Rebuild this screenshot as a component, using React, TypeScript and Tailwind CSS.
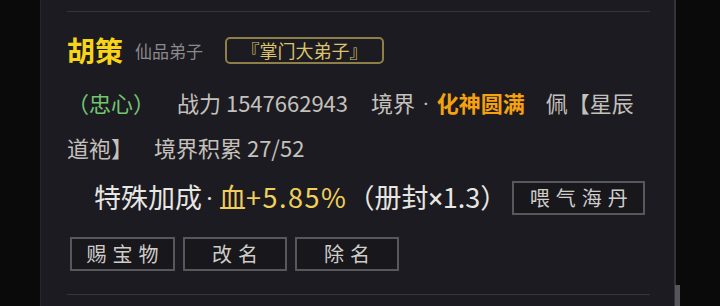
import React from 'react'

const FONT = '"Noto Sans CJK SC", "Noto Sans", sans-serif'
const LATIN = { fontFamily: 'Roboto, "Liberation Sans", sans-serif' }

function Btn({ label, className = '' }: { label: string; className?: string }) {
  return (
    <div
      className={`shrink-0 flex items-center justify-center border-2 border-[#58575c] bg-[#18171c] text-[#cfcdca] text-[20px] tracking-[6px] ${className}`}
    >
      <span className="mr-[-6px]">{label}</span>
    </div>
  )
}

export default function App() {
  return (
    <div className="w-[720px] h-[306px] bg-[#0a0a0a] overflow-hidden flex" style={{ fontFamily: FONT }}>
      <div className="relative ml-[40px] w-[636px] h-full bg-[#1c1b21] border-l border-[#28272d] border-r-2 border-r-[#34333a]">
        <div className="pl-[26px] pr-[24px] pt-[11px]">
          <div className="border-t border-[#36353b]" />

          {/* name row */}
          <div className="mt-[20px] h-[36px] flex items-center">
            <span className="text-[28px] font-bold text-[#f7d418] leading-none">胡策</span>
            <span className="ml-[12px] text-[17px] text-[#8a898c] leading-none">仙品弟子</span>
            <span className="ml-[22px] h-[27px] w-[159px] flex items-center justify-center rounded-[5px] border-2 border-[#8c7f48] text-[18px] text-[#dcc46c] leading-none">
              『掌门大弟子』
            </span>
          </div>

          {/* info */}
          <div className="mt-[13px] text-[22px] leading-[43px] text-[#c4c1bc] whitespace-nowrap">
            <div>
              <span className="text-[#72c66f]">（忠心）</span>
              <span className="ml-[22px]">战力 1547662943</span>
              <span className="ml-[23px]">境界</span>
              <span style={LATIN} className="px-[8px]">·</span>
              <span className="font-bold text-[#f5a20e]">化神圆满</span>
              <span className="ml-[21px]">佩【星辰</span>
            </div>
            <div>
              <span>道袍】</span>
              <span className="ml-[21px]">境界积累 27/52</span>
            </div>
          </div>

          {/* special bonus */}
          <div className="mt-[12px] h-[34px] flex items-center pl-[27px]">
            <span className="shrink-0 text-[27px] text-[#e8e6e2] leading-none whitespace-nowrap">
              特殊加成<span style={LATIN} className="pl-[4px] pr-[6px]">·</span>
              <span className="text-[#f0cf5a]">
                血<span className="tracking-[1.5px]">+5.85%</span>
              </span>
              （册封<span style={LATIN}>×</span>1.3）
            </span>
            <Btn label="喂气海丹" className="ml-[5px] w-[133px] h-[34px]" />
          </div>

          {/* actions */}
          <div className="mt-[22px] ml-[3px] flex gap-[8px]">
            <Btn label="赐宝物" className="w-[105px] h-[34px]" />
            <Btn label="改名" className="w-[104px] h-[34px]" />
            <Btn label="除名" className="w-[104px] h-[34px]" />
          </div>

          <div className="mt-[23px] border-t border-[#36353b]" />
        </div>
        <div className="absolute right-[-6px] top-[285px] w-[5px] h-[21px] bg-[#56555b]" />
      </div>
    </div>
  )
}
